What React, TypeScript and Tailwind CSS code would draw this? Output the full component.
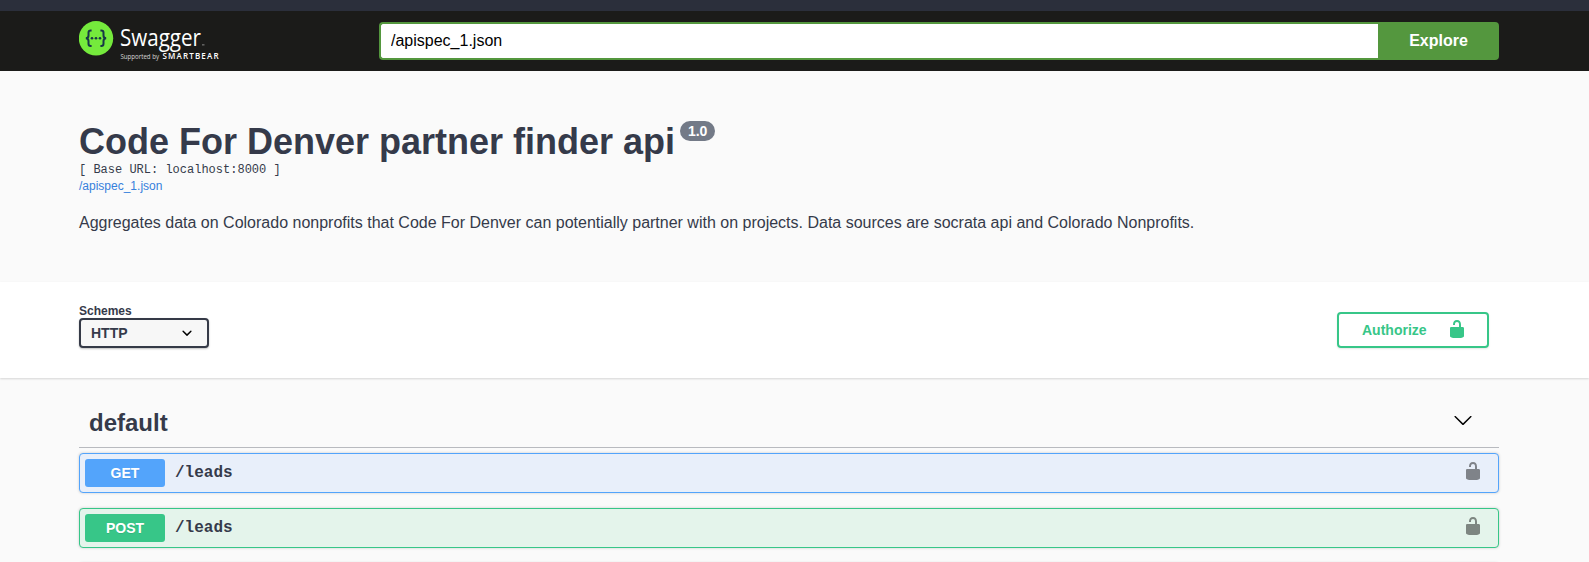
import React from "react";

const UNLOCKED =
  "M15.8 8H14V5.6C14 2.703 12.665 1 10 1 7.334 1 6 2.703 6 5.6V6h2v-.801C8 3.754 8.797 3 10 3c1.203 0 2 .754 2 2.199V8H4c-.553 0-1 .646-1 1.199V17c0 .549.428 1.139.951 1.307l1.197.387C5.672 18.861 6.55 19 7.1 19h5.8c.549 0 1.428-.139 1.951-.307l1.196-.387c.524-.167.953-.757.953-1.306V9.199C17 8.646 16.352 8 15.8 8z";
const LARGE_DOWN =
  "M17.418 6.109c.272-.268.709-.268.979 0s.271.701 0 .969l-7.908 7.83c-.27.268-.707.268-.979 0l-7.908-7.83c-.27-.268-.27-.701 0-.969.271-.268.709-.268.979 0L10 13.25l7.418-7.141z";
const SMALL_DOWN =
  "M13.418 7.859a.695.695 0 0 1 .978 0 .68.68 0 0 1 0 .969l-3.908 3.83a.697.697 0 0 1-.979 0l-3.908-3.83a.68.68 0 0 1 0-.969.695.695 0 0 1 .978 0L10 11l3.418-3.141z";

function Icon({ d, className = "" }: { d: string; className?: string }) {
  return (
    <svg viewBox="0 0 20 20" className={`h-5 w-5 shrink-0 ${className}`} fill="currentColor" aria-hidden="true">
      <path d={d} />
    </svg>
  );
}

function Logo() {
  return (
    <svg className="h-[44px] w-[142px] shrink-0" viewBox="0 0 142 44" role="img" aria-label="Swagger">
      <circle cx="17" cy="19.3" r="17.2" fill="#75ea3c" />
      <g fill="none" stroke="#173647" strokeWidth="2">
        <path d="M12.6 11.4H11.8Q9.5 11.4 9.5 13.6V16.4Q9.5 19.2 6.8 19.2Q9.5 19.2 9.5 22V24.8Q9.5 27 11.8 27H12.6" />
        <path d="M21.4 11.4H22.2Q24.5 11.4 24.5 13.6V16.4Q24.5 19.2 27.2 19.2Q24.5 19.2 24.5 22V24.8Q24.5 27 22.2 27H21.4" />
      </g>
      <g fill="#173647">
        <circle cx="13" cy="19.2" r="1.3" />
        <circle cx="17" cy="19.2" r="1.3" />
        <circle cx="21" cy="19.2" r="1.3" />
      </g>
      <g fill="#fff" className="font-['Open_Sans',sans-serif]">
        <text x="41" y="26.5" fontSize="23.5" fontWeight="400" textLength="81" lengthAdjust="spacingAndGlyphs">Swagger</text>
        <rect x="123" y="25.5" width="2.5" height="0.8" opacity="0.6" />
        <text x="41.5" y="40" fontSize="6.2" opacity="0.8" textLength="38.5" lengthAdjust="spacingAndGlyphs">Supported by</text>
        <text x="83.5" y="40" fontSize="8" fontWeight="600" textLength="56" lengthAdjust="spacing">SMARTBEAR</text>
      </g>
    </svg>
  );
}

function Operation({ method, path, block, badge }: { method: string; path: string; block: string; badge: string }) {
  return (
    <div className={`flex h-10 items-center rounded border pr-[15px] pl-[5px] shadow-[0_0_3px_rgba(0,0,0,0.19)] ${block}`}>
      <span className={`h-7 w-20 rounded-[3px] text-center text-[14px] leading-7 font-bold text-white [text-shadow:0_1px_0_rgba(0,0,0,0.1)] ${badge}`}>
        {method}
      </span>
      <span className="ml-2.5 flex-1 font-['Liberation_Mono',monospace] text-[16px] leading-5 font-bold">{path}</span>
      <Icon d={UNLOCKED} className="mb-[5px] text-black/45" />
    </div>
  );
}

export default function App() {
  return (
    <div className="h-[562px] w-full overflow-hidden bg-[#fafafa] font-['Liberation_Sans',Arial,sans-serif] text-[#353a4a]">
      <div className="h-[11px] bg-[#2b2f3b]" />
      <header className="h-[60px] bg-[#1b1b19] pt-2 pr-[11px]">
        <div className="mx-auto flex w-[1420px] items-start">
          <div className="w-[300px] shrink-0">
            <Logo />
          </div>
          <form className="mt-[3px] flex h-[38px] flex-1" onSubmit={(e) => e.preventDefault()}>
            <input
              className="min-w-0 flex-1 rounded-l border-2 border-r-0 border-[#54973e] bg-white pl-2.5 text-[16px] text-black outline-none"
              defaultValue="/apispec_1.json"
              aria-label="Specification"
            />
            <button className="w-[121px] rounded-r bg-[#54973e] text-[16px] font-bold text-white">Explore</button>
          </form>
        </div>
      </header>

      <div className="pr-[11px]">
        <section className="mx-auto h-[211px] w-[1420px] pt-[50px]">
          <div className="flex items-start">
            <h1 className="text-[36px] leading-[41px] font-bold">Code For Denver partner finder api</h1>
            <span className="ml-[5px] h-5 w-[35px] rounded-full bg-[#737a87] text-center text-[14px] leading-5 font-bold text-white">1.0</span>
          </div>
          <pre className="mt-px font-['Liberation_Mono',monospace] text-[12px] leading-[15px]">[ Base URL: localhost:8000 ]</pre>
          <a className="block text-[12px] leading-[17px] text-[#3680dc]" href="#spec">/apispec_1.json</a>
          <p className="mt-4 text-[16px] leading-6">
            Aggregates data on Colorado nonprofits that Code For Denver can potentially partner with on projects. Data sources are socrata api and Colorado Nonprofits.
          </p>
        </section>
      </div>

      <section className="h-24 bg-white pr-[11px] shadow-[0_1px_2px_rgba(0,0,0,0.15)]">
        <div className="mx-auto flex w-[1420px] items-start justify-between pr-2.5">
          <div className="pt-[22px]">
            <div className="text-[12px] leading-[14px] font-bold">Schemes</div>
            <div className="flex h-[30px] w-[130px] items-center justify-between rounded border-2 border-[#353a47] bg-[#f7f7f7] pr-2.5 pl-2.5 shadow-[0_1px_2px_rgba(0,0,0,0.25)]">
              <span className="text-[14px] leading-5 font-bold">HTTP</span>
              <Icon d={SMALL_DOWN} className="text-black" />
            </div>
          </div>
          <button className="mt-[30px] flex h-9 w-[152px] items-center rounded border-2 border-[#37c688] pr-5 pl-[23px] text-[14px] font-bold text-[#37c688] shadow-[0_1px_2px_rgba(0,0,0,0.1)]">
            <span className="flex-1 text-left">Authorize</span>
            <Icon d={UNLOCKED} className="mb-0.5" />
          </button>
        </div>
      </section>

      <div className="pr-[11px]">
        <main className="mx-auto w-[1420px] pt-5">
          <div className="mb-[5px] flex h-[50px] items-center justify-between border-b border-[#3b4151]/35 pr-[26px] pl-2.5">
            <h2 className="text-[24px] leading-7 font-bold">default</h2>
            <Icon d={LARGE_DOWN} className="mb-[5px] text-black" />
          </div>
          <div className="flex flex-col gap-[15px]">
            <Operation method="GET" path="/leads" block="border-[#53a4fb] bg-[#e8effa]" badge="bg-[#53a4fb]" />
            <Operation method="POST" path="/leads" block="border-[#37c688] bg-[#e4f4eb]" badge="bg-[#37c688]" />
            <div className="h-10 rounded border border-[#53a4fb] shadow-[0_0_3px_rgba(0,0,0,0.19)]" />
          </div>
        </main>
      </div>
    </div>
  );
}
